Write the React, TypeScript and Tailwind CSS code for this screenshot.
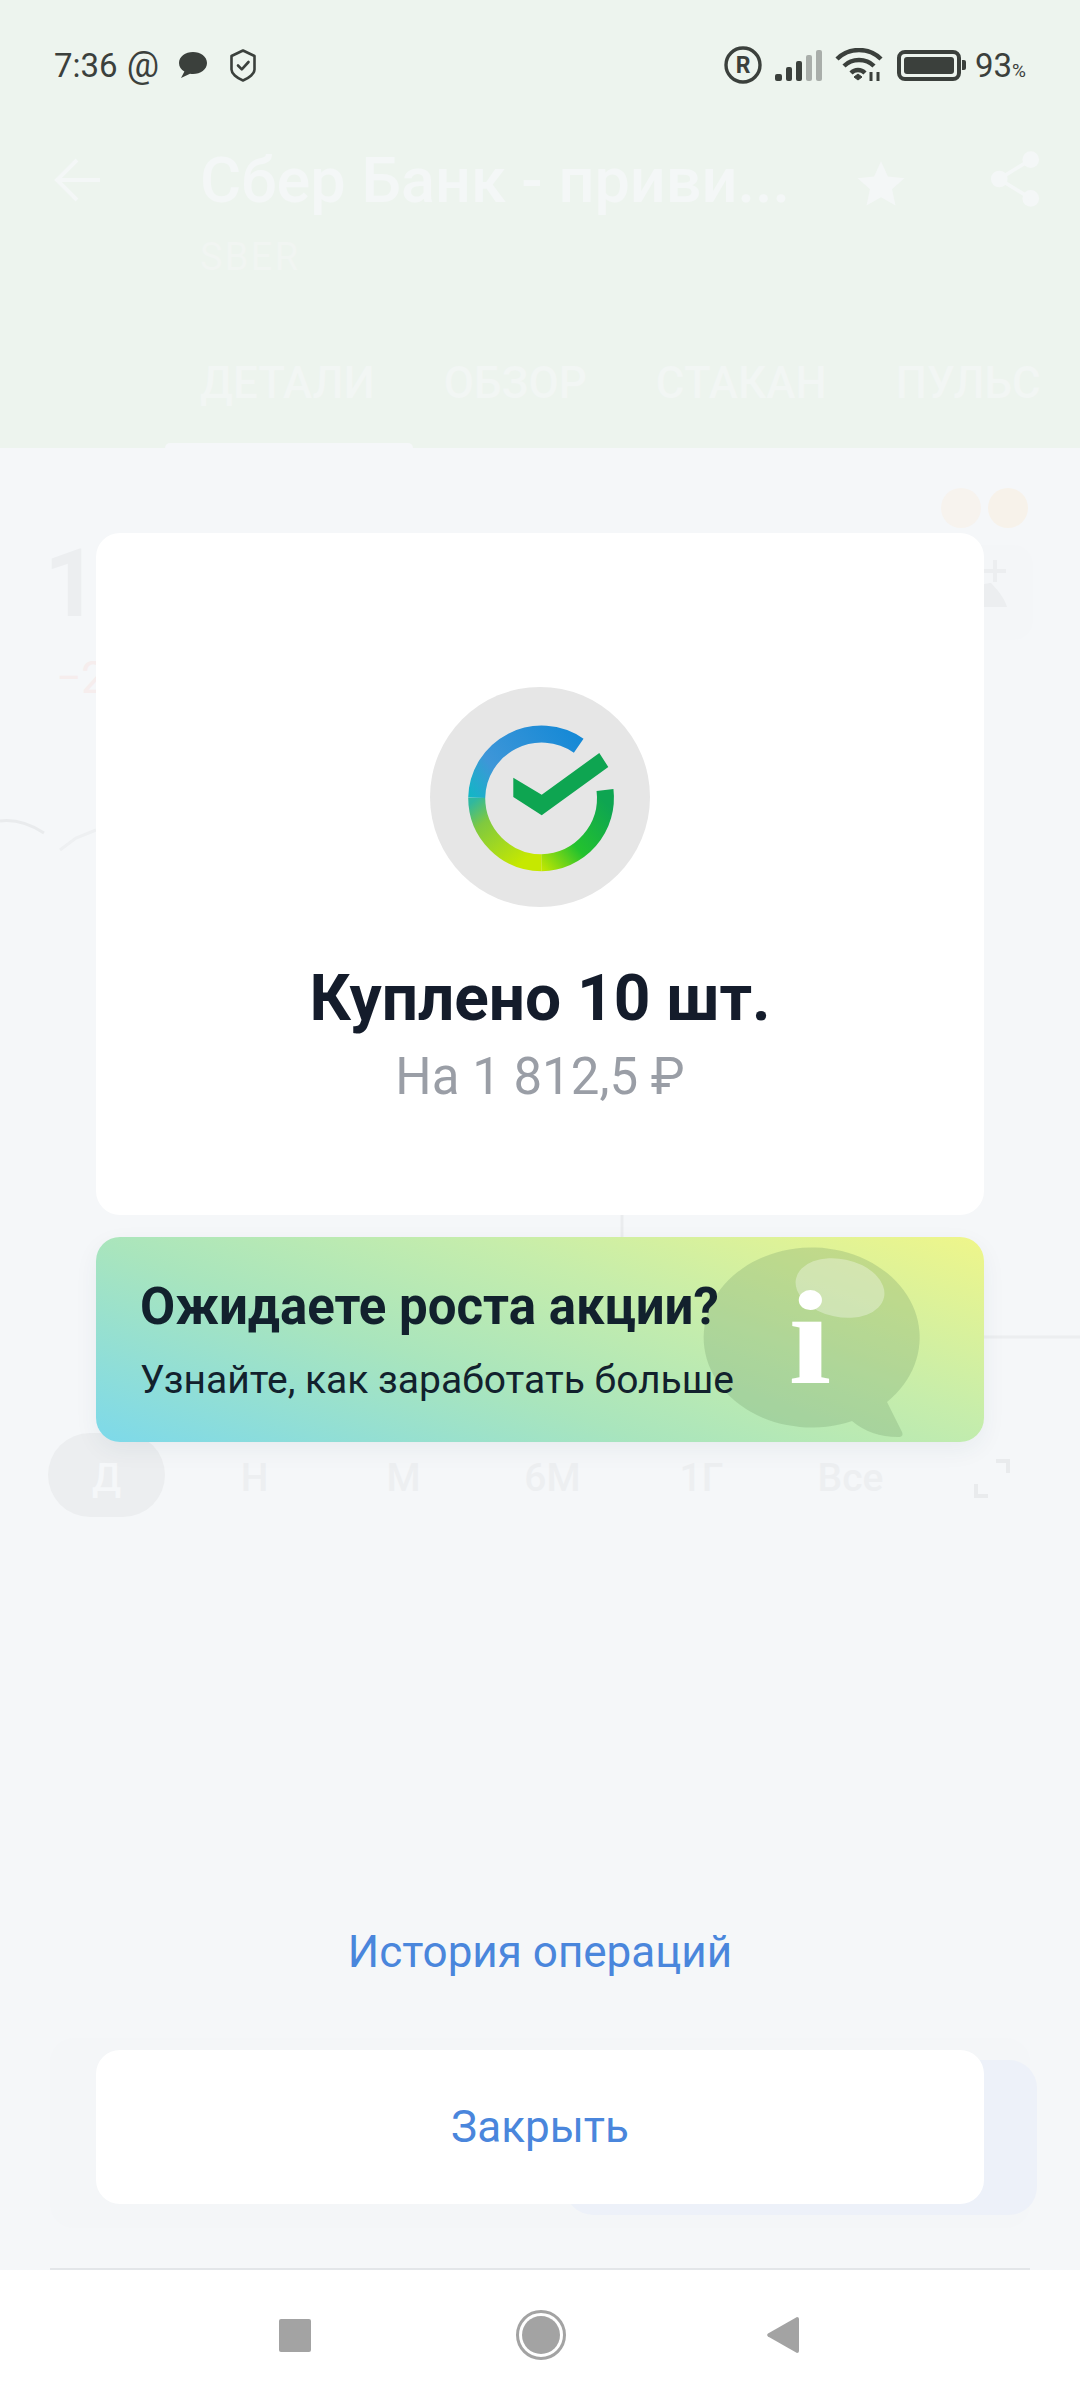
const roboto = "font-['Roboto',sans-serif]";

const periods = ["Н", "М", "6М", "1Г", "Все"];

function StatusBar() {
  return (
    <div className="flex items-center justify-between h-[130px] pl-[54px] pr-[54px] text-[#3b403c]">
      <div className="flex items-center">
        <span className="text-[33px] leading-none">7:36</span>
        <span className="text-[36px] leading-none ml-[9px]">@</span>
        <svg className="ml-[20px]" width="28" height="28" viewBox="0 0 28 28">
          <path d="M14 1C6.5 1 0 5.5 0 12c0 3.8 2.2 6.8 5.4 8.6L2 27l9-4.2c1 .2 2 .2 3 .2 7.500 0 14-4.600 14-11S21.500 1 14 1z" fill="#3b403c" />
        </svg>
        <svg className="ml-[23px]" width="26" height="33" viewBox="0 0 26 33" fill="none" stroke="#3b403c" strokeWidth="2.600">
          <path d="M13 1.500 24.500 7v13.500c0 4-5 8.500-11.500 11C6.500 29 1.500 24.500 1.500 20.500V7z" strokeLinejoin="round" />
          <path d="M8 16.500l3.800 3.800L18.500 13" strokeLinecap="round" strokeLinejoin="round" />
        </svg>
      </div>
      <div className="flex items-center">
        <svg width="38" height="38" viewBox="0 0 38 38" fill="none">
          <circle cx="19" cy="19" r="17" stroke="#3b403c" strokeWidth="3.400" />
          <text x="19" y="27" textAnchor="middle" fontSize="23" fontWeight="700" fontFamily="Roboto, sans-serif" fill="#3b403c">R</text>
        </svg>
        <svg className="ml-[13px]" width="48" height="31" viewBox="0 0 48 31">
          <rect x="0" y="24" width="7" height="7" rx="2" fill="#3b403c" />
          <rect x="11" y="17" width="6" height="14" rx="2" fill="#3b403c" />
          <rect x="21" y="11" width="6" height="20" rx="2" fill="#3b403c" />
          <rect x="31" y="5" width="6" height="26" rx="2" fill="#a9aeaa" />
          <rect x="41" y="0" width="6" height="31" rx="2" fill="#a9aeaa" />
        </svg>
        <svg className="ml-[12px]" width="48" height="34" viewBox="0 0 48 34" fill="none" stroke="#3b403c" strokeWidth="4.400">
          <path d="M2 11C14-1 34-1 46 11" />
          <path d="M9 18C17 10 31 10 39 18" />
          <path d="M16 25c4-4 10-4 14 0" />
          <path d="M19 29l4-3 4 3-4 3z" fill="#3b403c" strokeWidth="1" />
          <path d="M36 24v9M43 24v9" strokeWidth="3" />
        </svg>
        <div className="ml-[14px] flex items-center">
          <div className="w-[64px] h-[31px] rounded-[8px] border-[4px] border-[#3b403c] p-[3px]">
            <div className="w-full h-full rounded-[3px] bg-[#3b403c]" />
          </div>
          <div className="w-[4px] h-[10px] ml-[1px] rounded-r-[2px] bg-[#3b403c]" />
        </div>
        <span className="ml-[9px] text-[33px] leading-none">93</span>
        <span className="text-[19px] leading-none mt-[10px]">%</span>
      </div>
    </div>
  );
}

function SberLogo() {
  return (
    <svg width="220" height="220" viewBox="0 0 220 220" fill="none">
      <defs>
        <linearGradient id="ringTop" gradientUnits="userSpaceOnUse" x1="150" y1="50" x2="50" y2="125">
          <stop offset="0" stopColor="#1589d6" />
          <stop offset="0.7" stopColor="#3e96d8" />
          <stop offset="1" stopColor="#10b8c4" />
        </linearGradient>
        <linearGradient id="ringLeft" gradientUnits="userSpaceOnUse" x1="47" y1="110" x2="95" y2="172">
          <stop offset="0" stopColor="#2fb8a0" />
          <stop offset="0.3" stopColor="#7fc93f" />
          <stop offset="1" stopColor="#c6e800" />
        </linearGradient>
        <linearGradient id="ringRight" gradientUnits="userSpaceOnUse" x1="105" y1="175" x2="176" y2="115">
          <stop offset="0" stopColor="#c6e800" />
          <stop offset="0.45" stopColor="#23c22e" />
          <stop offset="1" stopColor="#0ea551" />
        </linearGradient>
      </defs>
      <circle cx="110" cy="110" r="110" fill="#e6e6e6" />
      <g transform="translate(0 1)">
        <path d="M148.700 57.700A65 65 0 0 0 46.700 109.700" stroke="url(#ringTop)" strokeWidth="17" />
        <path d="M46.700 109.700A65 65 0 0 0 111.700 174.700" stroke="url(#ringLeft)" strokeWidth="17" />
        <path d="M111.700 174.700A65 65 0 0 0 175 102" stroke="url(#ringRight)" strokeWidth="17" />
        <path d="M83.300 89.700 111.700 106.700 169.300 65 178.300 79 111.700 127.300 83.300 109z" fill="#0ea551" />
      </g>
    </svg>
  );
}

function InfoBubble() {
  return (
    <svg className="absolute left-[605px] top-0" width="240" height="205" viewBox="0 0 240 205">
      <path
        d="M151 184A108 90 0 1 1 186 165L201 195Q203 200 197 200Q170 200 151 184Z"
        fill="#6f9868"
        fillOpacity="0.27"
      />
      <ellipse cx="139" cy="51" rx="45" ry="29" transform="rotate(12 139 51)" fill="#ffffff" fillOpacity="0.32" />
      <text
        x="0"
        y="0"
        transform="translate(109 146) scale(1.15 1)"
        textAnchor="middle"
        fontSize="134"
        fontWeight="700"
        fontFamily="'Liberation Serif', serif"
        fill="#ffffff"
      >
        i
      </text>
    </svg>
  );
}

function BackgroundScreen() {
  return (
    <div className="flex flex-col h-full">
      <header className="h-[448px] bg-[#edf4ee] flex flex-col">
        <StatusBar />
        <div className="flex items-start h-[109px] pt-[8px] pl-[54px] text-[#f4f7f7]">
          <svg className="mt-[20px]" width="46" height="44" viewBox="0 0 46 44" fill="none" stroke="currentColor" strokeWidth="4">
            <path d="M46 22H3M23 2 3 22l20 20" />
          </svg>
          <div className="ml-[100px] mt-[5px] w-[600px] text-[63px] leading-[76px] font-medium whitespace-nowrap">Сбер Банк - приви...</div>
          <svg className="ml-[55px] mt-[20px]" width="52" height="52" viewBox="0 0 24 24" fill="currentColor">
            <path d="M12 1.500l3.200 7 7.600.8-5.700 5.100 1.600 7.500L12 18.100l-6.700 3.800 1.600-7.500L1.200 9.300l7.600-.8z" />
          </svg>
          <svg className="ml-[83px] mt-[12px]" width="50" height="58" viewBox="0 0 54 62" fill="currentColor">
            <circle cx="44" cy="10" r="9" />
            <circle cx="10" cy="31" r="9" />
            <circle cx="44" cy="52" r="9" />
            <path d="M44 10 10 31l34 21" fill="none" stroke="currentColor" strokeWidth="4" />
          </svg>
        </div>
        <div className="pl-[200px] text-[38px] leading-[36px] tracking-[0.06em] text-[#f1f5f2]">SBER</div>
        <div className="flex mt-[83px] pl-[200px] gap-[69px] text-[44px] leading-[50px] font-medium text-[#f2f6f4] whitespace-nowrap">
          <span>ДЕТАЛИ</span>
          <span>ОБЗОР</span>
          <span>СТАКАН</span>
          <span>ПУЛЬС</span>
        </div>
        <div className="w-[248px] h-[5px] ml-[165px] mt-[35px] rounded-t-[8px] bg-[#f5f7f9]" />
      </header>

      <main className="relative flex-1 bg-[#f5f7f9] overflow-hidden">
        <div className="flex justify-between pl-[44px] pr-[47px]">
          <div className="pt-[86px]">
            <div className="text-[95px] leading-[100px] font-bold text-[#eceef0]">1</div>
            <div className="mt-[22px] ml-[12px] text-[44px] leading-[44px] text-[#f6eded]">−2</div>
          </div>
          <div className="flex flex-col items-end pt-[40px]">
            <div className="flex gap-[7px] mr-[5px]">
              <div className="w-[40px] h-[40px] rounded-full bg-[#f7f3ee]" />
              <div className="w-[40px] h-[40px] rounded-full bg-[#f7f2ea]" />
            </div>
            <div className="w-[100px] h-[95px] mt-[17px] rounded-[20px] bg-[#f4f6f8]">
              <svg width="100" height="95" viewBox="0 0 100 95" fill="#eceef0">
                <path d="M20 62c10-16 30-24 38-24 6 6 14 16 16 24z" />
                <path d="M60 15h4v9h9v4h-9v9h-4v-9h-9v-4h9z" />
              </svg>
            </div>
          </div>
        </div>
        <div className="absolute left-0 top-[340px] w-full h-[560px]">
          <svg width="1080" height="560" viewBox="0 0 1080 560" fill="none">
            <path d="M0 33c16-2 30 3 44 12" stroke="#e9ebed" strokeWidth="3" />
            <path d="M60 62 76 50 96 42" stroke="#eef0f2" strokeWidth="3" />
            <path d="M622 427v22" stroke="#eaecee" strokeWidth="3" />
            <path d="M983 549h97" stroke="#eceef0" strokeWidth="3" />
          </svg>
        </div>
        <div className="absolute left-[48px] top-[985px] flex items-center text-[39px] font-medium text-[#edeff1]">
          <div className="w-[117px] h-[84px] pt-[6px] rounded-[42px] bg-[#eceef0] flex items-center justify-center text-[#f5f7f9]">Д</div>
          <div className="flex ml-[15px] mt-[6px]">
            {periods.map((p) => (
              <span key={p} className="w-[149px] text-center">{p}</span>
            ))}
          </div>
          <svg className="ml-[49px] mt-[6px]" width="36" height="39" viewBox="0 0 36 39" fill="none" stroke="#e9ebed" strokeWidth="4">
            <path d="M22 2h12v12M2 25v12h12" />
          </svg>
        </div>
        <div className="absolute left-[50px] right-[50px] top-[1590px] h-[190px] rounded-[24px] bg-[#f4f6f8]" />
        <div className="absolute left-[565px] top-[1612px] w-[472px] h-[155px] rounded-[28px] bg-[#edf1f9]" />
        <div className="absolute left-[50px] right-[50px] bottom-0 h-[2px] bg-[#e3e6e9]" />
      </main>

      <nav className="h-[130px] bg-white flex items-center relative">
        <div className="flex items-center w-full">
          <div className="w-[32px] h-[33px] ml-[279px] rounded-[2px] bg-[#a3a3a3]" />
          <div className="w-[50px] h-[50px] ml-[205px] rounded-full border-[3px] border-[#a3a3a3] p-[3px]">
            <div className="w-full h-full rounded-full bg-[#a3a3a3]" />
          </div>
          <svg className="ml-[201px]" width="32" height="38" viewBox="0 0 32 38">
            <path d="M30 1a2 2 0 0 1 2 2v32a2 2 0 0 1-2 2L1 20.500a2 2 0 0 1 0-3z" fill="#a3a3a3" />
          </svg>
        </div>
      </nav>
    </div>
  );
}

function ResultModal() {
  return (
    <div className="absolute left-0 top-0 w-full h-[2270px] flex flex-col px-[96px] pt-[533px]">
      <section className="h-[682px] rounded-[24px] bg-white flex flex-col items-center pt-[154px]">
        <SberLogo />
        <h1 className="mt-[56px] text-[64px] leading-[72px] font-bold text-[#141c2b]">Куплено 10 шт.</h1>
        <p className="mt-[12px] text-[51px] leading-[60px] text-[#9a9ea6]">На 1 812,5 ₽</p>
      </section>

      <section className="relative mt-[22px] h-[205px] rounded-[24px] overflow-hidden bg-[linear-gradient(20deg,#7dd9ea_0%,#a9e5bd_38%,#c6edab_65%,#eff68a_100%)] shadow-[0_8px_24px_rgba(40,60,80,0.06)] pl-[44px] pt-[40px]">
        <InfoBubble />
        <h2 className="relative text-[51px] leading-[60px] font-bold text-[#12212d] whitespace-nowrap">Ожидаете роста акции?</h2>
        <p className="relative mt-[20px] text-[39px] leading-[46px] text-[#12212d] whitespace-nowrap">Узнайте, как заработать больше</p>
      </section>

      <a className="mt-[482px] text-center text-[44px] leading-[56px] text-[#4a86dc]">История операций</a>

      <button className="mt-[70px] h-[154px] rounded-[24px] bg-white text-[44px] text-[#4a86dc]">Закрыть</button>
    </div>
  );
}

export default function App() {
  return (
    <div className={`relative w-[1080px] h-[2400px] overflow-hidden ${roboto}`}>
      <BackgroundScreen />
      <ResultModal />
    </div>
  );
}
